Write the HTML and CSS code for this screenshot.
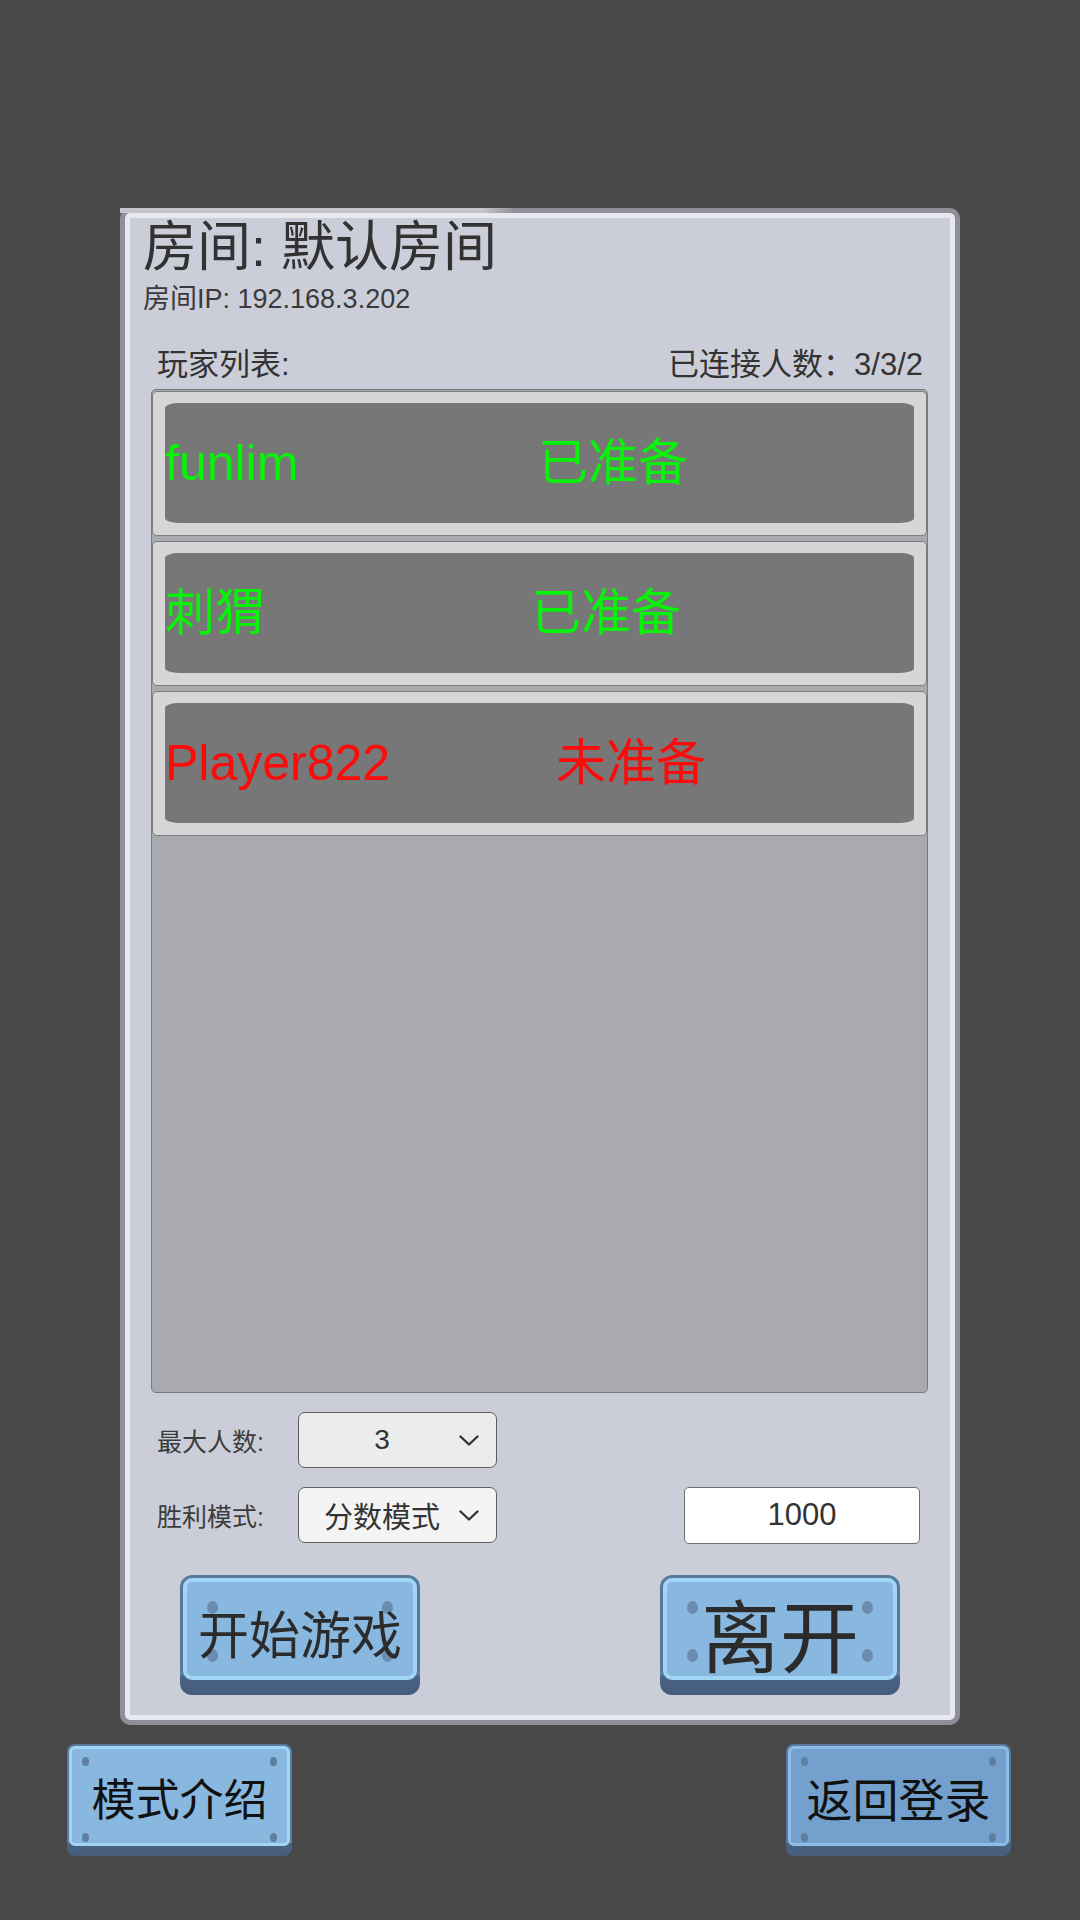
FILE: index.html
```html
<!DOCTYPE html>
<html lang="zh">
<head>
<meta charset="utf-8">
<title>房间</title>
<link rel="stylesheet" href="styles.css">
</head>
<body>
<div class="screen">
  <div class="panel">
    <div class="panel-patch"></div>
    <div class="title">房间: 默认房间</div>
    <div class="ip">房间IP: 192.168.3.202</div>
    <div class="list-head">
      <span>玩家列表:</span>
      <span>已连接人数：3/3/2</span>
    </div>
    <div class="list">
      <div class="row">
        <div class="slot ready">
          <span class="name">funlim</span>
          <span class="status">已准备</span>
        </div>
      </div>
      <div class="row">
        <div class="slot ready">
          <span class="name">刺猬</span>
          <span class="status shift-left">已准备</span>
        </div>
      </div>
      <div class="row">
        <div class="slot waiting">
          <span class="name">Player822</span>
          <span class="status shift-right">未准备</span>
        </div>
      </div>
    </div>

    <div class="ctrl-row first">
      <span class="ctrl-label">最大人数:</span>
      <div class="dropdown">
        <span class="dd-text num">3</span>
        <svg class="chev" viewBox="0 0 20 11" width="20" height="11"><polyline points="1.5,1.5 10,9.5 18.5,1.5" fill="none" stroke="#333" stroke-width="2.4" stroke-linecap="round" stroke-linejoin="round"/></svg>
      </div>
    </div>
    <div class="ctrl-row">
      <span class="ctrl-label">胜利模式:</span>
      <div class="dropdown light">
        <span class="dd-text">分数模式</span>
        <svg class="chev" viewBox="0 0 20 11" width="20" height="11"><polyline points="1.5,1.5 10,9.5 18.5,1.5" fill="none" stroke="#333" stroke-width="2.4" stroke-linecap="round" stroke-linejoin="round"/></svg>
      </div>
      <div class="input">1000</div>
    </div>

    <div class="btn-row">
      <div class="btn big">
        <div class="face">
          <i class="screw tl"></i><i class="screw tr"></i><i class="screw bl"></i><i class="screw br"></i>
          <span class="btn-text start">开始游戏</span>
        </div>
      </div>
      <div class="btn big">
        <div class="face">
          <i class="screw tl"></i><i class="screw tr"></i><i class="screw bl"></i><i class="screw br"></i>
          <span class="btn-text leave">离开</span>
        </div>
      </div>
    </div>
  </div>

  <div class="bottom-row">
    <div class="btn small">
      <div class="face">
        <i class="screw tl"></i><i class="screw tr"></i><i class="screw bl"></i><i class="screw br"></i>
        <span class="btn-text">模式介绍</span>
      </div>
    </div>
    <div class="btn small pressed">
      <div class="face">
        <i class="screw tl"></i><i class="screw tr"></i><i class="screw bl"></i><i class="screw br"></i>
        <span class="btn-text">返回登录</span>
      </div>
    </div>
  </div>
</div>
</body>
</html>
```

FILE: styles.css
```css
html, body {
  margin: 0;
  padding: 0;
}
body {
  width: 1080px;
  height: 1920px;
  background: #484848;
  font-family: "Liberation Sans", "Noto Sans CJK SC", sans-serif;
  color: #323232;
  overflow: hidden;
}
.screen {
  padding-top: 208px;
  height: 1920px;
  box-sizing: border-box;
}

/* ---------- panel ---------- */
.panel {
  position: relative;
  margin-left: 120px;
  width: 840px;
  height: 1517px;
  box-sizing: border-box;
  border: 5px solid #8e8f98;
  border-radius: 10px;
  background: #cbced8;
  box-shadow: inset 0 0 0 5px #e8e9ee;
  padding-top: 7px;
}
.panel-patch {
  position: absolute;
  top: -5px;
  left: -5px;
  width: 395px;
  height: 5px;
  background: linear-gradient(to right, #c4c5cc 0, #c4c5cc 92%, rgba(196,197,204,0) 100%);
}
.title {
  margin-left: 18px;
  font-size: 54px;
  line-height: 54px;
  color: #323232;
}
.ip {
  margin: 10px 0 0 18px;
  font-size: 27px;
  line-height: 30px;
  color: #3a3a3a;
}
.list-head {
  display: flex;
  justify-content: space-between;
  margin-top: 33px;
  padding: 0 32px;
  font-size: 31px;
  line-height: 36px;
  color: #333;
}

/* ---------- player list ---------- */
.list {
  margin: 6px 27px 0 26px;
  height: 1004px;
  box-sizing: border-box;
  border: 1px solid #7b7b7e;
  border-radius: 5px;
  background: #a9aaaf;
  padding: 1px 0 0;
}
.row {
  height: 145px;
  box-sizing: border-box;
  margin-bottom: 5px;
  border: 1px solid #7d7d7d;
  border-radius: 5px;
  background: #d6d6d6;
  padding: 11px 12px 12px 12px;
}
.slot {
  height: 100%;
  display: flex;
  align-items: center;
  background: #777777;
  border-radius: 14px / 5px;
  font-size: 50px;
  line-height: 60px;
}
.slot .name {
  width: 373px;
  flex: none;
}
.slot .status.shift-left { margin-left: -7px; }
.slot .status.shift-right { margin-left: 18px; }
.ready { color: #08f20a; }
.waiting { color: #ff0a0a; }

/* ---------- controls ---------- */
.ctrl-row {
  display: flex;
  align-items: center;
  height: 56px;
  margin-top: 19px;
  padding-left: 32px;
}
.ctrl-row.first { margin-top: 19px; }
.ctrl-label {
  width: 141px;
  flex: none;
  font-size: 25px;
  color: #3c3c3c;
}
.dropdown {
  position: relative;
  width: 199px;
  height: 56px;
  box-sizing: border-box;
  border: 1.5px solid #5e5e62;
  border-radius: 7px;
  background: #ececec;
  display: flex;
  align-items: center;
}
.dropdown.light { background: #f4f4f4; }
.dd-text {
  width: 166px;
  text-align: center;
  font-size: 29px;
  color: #333;
}
.dd-text.num { font-size: 28px; }
.chev {
  position: absolute;
  right: 17px;
  top: 22px;
}
.input {
  margin-left: auto;
  margin-right: 35px;
  width: 236px;
  height: 57px;
  box-sizing: border-box;
  border: 1.5px solid #6e6e72;
  border-radius: 5px;
  background: #ffffff;
  display: flex;
  align-items: center;
  justify-content: center;
  font-size: 31px;
  color: #333;
}

/* ---------- buttons ---------- */
.btn-row {
  display: flex;
  justify-content: space-between;
  margin-top: 32px;
  padding: 0 55px;
}
.btn {
  box-sizing: border-box;
  border-radius: 12px;
  background: linear-gradient(to bottom, #5a7a9b 0, #5a7a9b 84%, #4a6283 84%, #465d7c 100%);
  padding: 3px 3px 15px;
}
.btn.big {
  width: 240px;
  height: 120px;
}
.btn.small {
  width: 225px;
  height: 112px;
  padding: 2px 2px 10px;
  border-radius: 8px;
  background: linear-gradient(to bottom, #5a7a9b 0, #5a7a9b 88%, #4a6283 88%, #465d7c 100%);
}
.face {
  position: relative;
  height: 100%;
  box-sizing: border-box;
  border: 4px solid #a0d5f6;
  border-radius: 9px;
  background: #88b8df;
  display: flex;
  align-items: center;
  justify-content: center;
}
.btn.small .face {
  border-width: 3px;
  border-radius: 6px;
}
.btn.pressed .face {
  background: #73a0cc;
  border-color: #8dbde6;
}
.screw {
  position: absolute;
  width: 11px;
  height: 13px;
  border-radius: 50%;
  background: #6a8cae;
}
.big .screw.tl { left: 20px; top: 19px; }
.big .screw.tr { right: 20px; top: 19px; }
.big .screw.bl { left: 20px; top: 67px; }
.big .screw.br { right: 20px; top: 67px; }
.small .screw { width: 7px; height: 9px; background: #5f7f9f; }
.small .screw.tl { left: 10px; top: 8px; }
.small .screw.tr { right: 10px; top: 8px; }
.small .screw.bl { left: 10px; top: 84px; }
.small .screw.br { right: 10px; top: 84px; }
.btn-text {
  position: relative;
  font-family: "Noto Sans CJK SC", sans-serif;
  color: #2b2b2b;
  white-space: nowrap;
}
.btn-text.start {
  font-size: 51px;
  line-height: 51px;
  margin-top: 6px;
}
.btn-text.leave {
  font-size: 79px;
  line-height: 79px;
  margin-top: 6px;
}
.btn.small .btn-text {
  font-size: 44px;
  line-height: 44px;
  color: #111;
  margin-top: 2px;
}
.btn.small.pressed .btn-text { font-size: 46px; }

/* ---------- bottom row ---------- */
.bottom-row {
  display: flex;
  justify-content: space-between;
  margin-top: 19px;
  padding: 0 69px 0 67px;
}
```
